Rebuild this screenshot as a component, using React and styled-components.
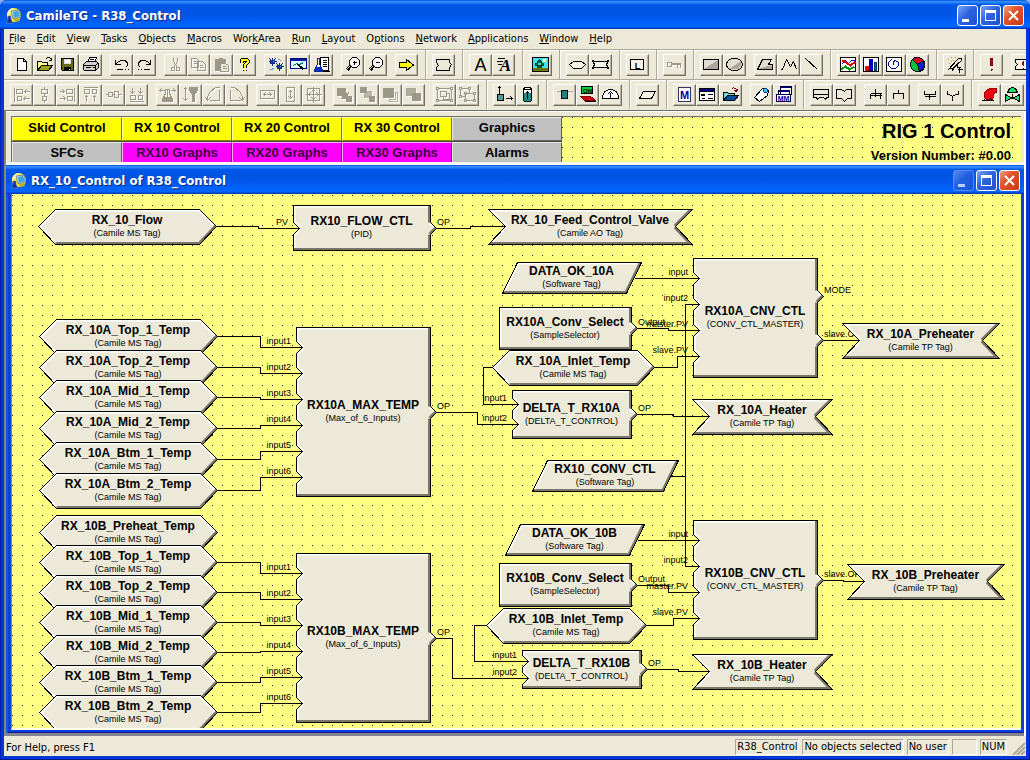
import React from 'react';
import styled, {createGlobalStyle, css} from 'styled-components';

const ui = `"DejaVu Sans Condensed", "DejaVu Sans", sans-serif`;
const arial = `"Liberation Sans", Arial, sans-serif`;
const face = '#ece9d8';

const dots = css`
  background-color: #ffff84;
  background-image: linear-gradient(90deg, #ffff84 9px, transparent 9px), linear-gradient(#222 1px, transparent 1px);
  background-size: 10px 10px;
  background-position: 1px 0;
`;

const GlobalStyle = createGlobalStyle`
  * {
    box-sizing: border-box;
  }

  body {
    margin: 0;
    background: #8fb0ee;
    font-family: ${ui};
    font-size: 11px;
    color: #000;
  }

  button {
    font: inherit;
    color: inherit;
    padding: 0;
    border: 0;
    background: none;
  }
`;

const Frame = styled.div`
  display: flex;
  flex-direction: column;
  height: 100vh;
  overflow: hidden;
  padding: 0 4px 4px;
  border-radius: 7px 7px 0 0;
  background: #0038d8;
  box-shadow: inset 1px 0 #0020b0, inset -1px -1px #001a90;
`;

const TitleBar = styled.header`
  display: flex;
  align-items: center;
  flex: none;
  gap: 4px;
  height: 29px;
  margin: 0 ${({$child}) => ($child ? '-3px 0 -5px' : '-4px')};
  padding: 2px ${({$child}) => ($child ? 4 : 6)}px 0 ${({$child}) => ($child ? 5 : 6)}px;
  color: #fff;
  background: linear-gradient(#0050d8, #3a92ff 6%, #0058e8 16%, #0053e2 45%, #0061fb 80%, #0064ff 92%, #0040c8 97%, #0036b0);
`;

const Title = styled.h1`
  flex: 1;
  margin: 0;
  font-size: 13px;
  line-height: 16px;
  font-weight: bold;
  white-space: nowrap;
  text-shadow: 1px 1px #0a2a80;
`;

const Controls = styled.div`
  display: flex;
  gap: 2px;
`;

const ControlButton = styled.button`
  width: 21px;
  height: 21px;
  border: 1px solid #fff;
  border-radius: 3px;
  background: ${({$close}) => ($close
    ? 'linear-gradient(135deg, #f0a088, #e2532c 40%, #c83a10)'
    : 'linear-gradient(135deg, #7ba4f4, #2e63e0 45%, #1f4fd0)')};

  &:disabled {
    border-color: #7f9fe8;
    opacity: .7;
  }

  svg {
    display: block;
    width: 19px;
    height: 19px;
  }
`;

const Body = styled.div`
  display: flex;
  flex-direction: column;
  flex: 1;
  min-height: 0;
  background: ${face};
`;

const MenuBar = styled.nav`
  display: flex;
  flex: none;
  height: 20px;
`;

const MenuItem = styled.button`
  padding: 0 6px 0 5px;
  line-height: 18px;
  height: 19px;

  u {
    text-underline-offset: 1px;
  }
`;

const ToolRow = styled.div`
  display: flex;
  flex: none;
  height: 30px;
  padding-left: 6px;
  overflow: hidden;
  border-top: 1px solid #aca899;
  box-shadow: inset 0 1px #fff;
`;

const ToolGroup = styled.div`
  display: flex;
  align-items: center;
  flex: none;
  padding-right: ${({$rule}) => ($rule ? 7 : 6)}px;
  margin-right: ${({$rule}) => ($rule ? 6 : 2)}px;
  border-right: ${({$rule}) => ($rule ? '1px solid #aca899' : '0')};
  box-shadow: ${({$rule}) => ($rule ? '1px 0 #fff' : 'none')};
`;

const ToolButton = styled.button`
  flex: none;
  width: 23px;
  height: 22px;
  border: 1px solid;
  border-color: #fff #716f64 #716f64 #fff;
  box-shadow: inset -1px -1px #b8b4a4;
  color: #000;

  &:disabled {
    color: #9c9888;
  }

  &:disabled svg {
    filter: drop-shadow(1px 1px 0 #fff);
  }
`;

const Glyph = styled.svg.attrs({viewBox: '-0.5 -0.5 17 17', shapeRendering: 'crispEdges', 'aria-hidden': true})`
  display: block;
  width: 17px;
  height: 17px;
  margin: 0 auto;
  overflow: visible;
  fill: none;
  stroke: currentColor;

  text {
    stroke: none;
    fill: currentColor;
    text-anchor: middle;
    font-family: ${arial};
    font-weight: bold;
  }
`;

const Workspace = styled.main`
  display: flex;
  flex-direction: column;
  flex: 1;
  min-height: 0;
  margin-top: 1px;
  padding: 0 2px 3px 0;
  border-top: 1px solid #716f64;
  border-left: 2px solid #8a877a;
  background: #85838f;
  box-shadow: inset -2px 0 #fff;
`;

const HeaderWindow = styled.section`
  flex: none;
  padding: 5px 3px 3px 5px;
  background: ${face};
  box-shadow: inset 0 1px #fff, inset 0 -3px #f8f7f0;
`;

const HeaderPanel = styled.div`
  display: flex;
  justify-content: space-between;
  height: 46px;
  overflow: hidden;
  border-top: 1px solid #716f64;
  border-left: 1px solid #716f64;
  font-family: ${arial};
  ${dots}
`;

const NavGrid = styled.div`
  display: grid;
  grid-template-columns: repeat(5, 110px);
  grid-auto-rows: 24px;
  row-gap: 1px;
  height: 49px;
  background: #4c4a3a;
`;

const tones = {
    yellow: ['#ffff00', '#ffffa0', '#808000'],
    pink: ['#ff00ff', '#ffb0ff', '#800080'],
    gray: ['#c0c0c0', '#e8e8e8', '#606060'],
};

const NavButton = styled.button`
  padding-bottom: 3px;
  font-size: 13px;
  font-weight: bold;
  line-height: 16px;
  color: ${({$tone}) => ($tone === 'pink' ? '#38003c' : '#000')};
  background: ${({$tone}) => tones[$tone][0]};
  border: 1px solid;
  border-color: ${({$tone}) => `${tones[$tone][1]} ${tones[$tone][2]} ${tones[$tone][2]} ${tones[$tone][1]}`};
`;

const RigInfo = styled.div`
  padding-right: 10px;
  text-align: right;
  font-weight: bold;
  white-space: nowrap;
`;

const RigName = styled.div`
  font-size: 20px;
  line-height: 28px;
`;

const Version = styled.div`
  font-size: 13px;
  line-height: 22px;
`;

const ChildWindow = styled.section`
  display: flex;
  flex-direction: column;
  flex: 1;
  min-height: 0;
  padding: 0 3px 3px 5px;
  background: #0a3fdc;
  box-shadow: inset 2px 0 #0a5ae6, inset 0 -1px #001a90;
`;

const Canvas = styled.div`
  position: relative;
  flex: 1;
  min-height: 0;
  overflow: hidden;
  border-left: 1px solid #8a877a;
  border-bottom: 2px solid #fffff0;
  font-family: ${arial};
  ${dots}
  background-position: 1px 1px;
`;

const Wires = styled.svg`
  position: absolute;
  left: 0;
  top: 0;
  width: 100%;
  height: 100%;
  fill: none;
  stroke: #000;
`;

const NodeBox = styled.div`
  position: absolute;
  left: ${({$x}) => $x}px;
  top: ${({$y}) => $y}px;
  width: ${({$w}) => $w}px;
  height: ${({$h}) => $h}px;
  display: flex;
  flex-direction: column;
  align-items: center;
  justify-content: center;
  white-space: nowrap;
`;

const Shape = styled.svg`
  position: absolute;
  left: 0;
  top: 0;
  overflow: visible;
`;

const NodeName = styled.strong`
  position: relative;
  font-size: 12px;
  line-height: 13px;
`;

const NodeKind = styled.span`
  position: relative;
  font-size: 9px;
  line-height: 12px;
`;

const Pin = styled.span`
  position: absolute;
  top: ${({$y}) => $y - 12}px;
  font-size: 9px;
  line-height: 12px;
  ${({$out}) => ($out ? 'left: calc(100% + 7px);' : 'right: calc(100% + 5px);')}
`;

const StatusBar = styled.footer`
  display: flex;
  align-items: center;
  flex: none;
  gap: 3px;
  height: 20px;
  padding: 3px 0 1px 2px;
  white-space: nowrap;
`;

const Help = styled.span`
  flex: 1;
`;

const StatusCell = styled.span`
  height: 16px;
  line-height: 14px;
  min-width: ${({$w}) => $w}px;
  padding: 0 1px;
  border: 1px solid;
  border-color: #aca899 #fff #fff #aca899;
`;

const icons = {
    New: <path d="M4 2h6l3 3v9H4zM10 2v3h3" fill="#fff"/>,
    Open: <>
        <path d="M1 14V5h4l1 1h5v3" fill="#ffff90"/>
        <path d="M1 14l4-5h11l-4 5z" fill="#a0a020"/>
        <path d="M9 3l2-2h2l2 2M15 1v3h-3"/>
    </>,
    Save: <>
        <path d="M2 2h12v12H3l-1-1z" fill="#6b6b10"/>
        <path d="M5 3h6v4H5z" fill="#fff" stroke="#ddd"/>
        <path d="M5 11h6v3H5z" fill="#000"/>
        <path d="M10 12v1" stroke="#fff"/>
    </>,
    Print: <>
        <path d="M5 6l2-5h7l-2 5z" fill="#fff"/>
        <path d="M1 8l3-3h10l2 2v4l-3 3H2l-1-1z" fill="#d0d0d0"/>
        <path d="M7 3h4M6 5h4M1 9h12l2-2M3 11h9M13 9v4"/>
        <path d="M8 11h2" stroke="#dd0"/>
    </>,
    Undo: <path d="M2 3v5h5M2 8l3-3 3-1h3l2 1 1 2v2l-2 2M3 13h6M11 13h1M14 13h1"/>,
    Redo: <path d="M14 3v5H9M14 8l-3-3-3-1H5L3 5 2 7v2l2 2M13 13H7M5 13H4M2 13H1"/>,
    Cut: <path d="M6 1v4l4 6M10 1v4l-4 6M4 11h3v3H4zM9 11h3v3H9z"/>,
    Copy: <path d="M1 2h5l2 2v7H1zM3 5h3M3 7h3M7 5h5l3 3v6H7zM9 9h3M9 11h4"/>,
    Paste: <>
        <path d="M2 3h10v11H2z" fill="currentColor"/>
        <path d="M5 2h4"/>
        <path d="M7 7h5l3 2v6H7z" fill="#ece9d8"/>
        <path d="M9 10h3M9 12h4"/>
    </>,
    HelpTopics: <>
        <path d="M5 6V4l1-1h4l1 1v2L8 9v2M8 13v1" stroke="#000" strokeWidth="4"/>
        <path d="M5 6V4l1-1h4l1 1v2L8 9v2M8 13v1" stroke="#ff0" strokeWidth="2"/>
    </>,
    Configure: <>
        <path d="M1 5h8M5 1v8M2 2l6 6M8 2L2 8M8 10h8M12 6v8M9 7l6 6M15 7l-6 6" stroke="#102a90"/>
        <path d="M3 4h4v3H3zM10 9h4v3h-4z" fill="#1838a8" stroke="#102a90"/>
        <path d="M5 5h1M12 10h1M3 13l4-1M11 3l3 1" stroke="#58a8d8"/>
    </>,
    Monitor: <>
        <path d="M0 2h16v10H0z" fill="#e0ffff" stroke="#000080"/>
        <path d="M0 3h16" stroke="#0020a0" strokeWidth="2"/>
        <path d="M3 9l3-2 3 1 4-2" stroke="#008080"/>
        <path d="M7 8l6 6M8 8l6 5" stroke="#000"/>
    </>,
    Recipe: <>
        <path d="M7 1h8v13H7z" fill="#fff"/>
        <path d="M9 4h4M9 6h4M9 8h4M9 10h4M5 15h11"/>
        <path d="M4 2v6l-3 5v2h8v-2L6 8V2z" fill="#fff" stroke="#102a90"/>
        <path d="M3 11h4l1 3H2z" fill="#0030d0" stroke="#0030d0"/>
    </>,
    ZoomIn: <>
        <path d="M8 1h4l3 3v4l-3 3H8L5 8V4z" fill="#fff"/>
        <path d="M8 6h4M10 4v4"/>
        <path d="M6 10l-4 4M5 9l-4 4M6 11l-3 4"/>
    </>,
    ZoomOut: <>
        <path d="M8 1h4l3 3v4l-3 3H8L5 8V4z" fill="#fff"/>
        <path d="M8 6h4"/>
        <path d="M6 10l-4 4M5 9l-4 4M6 11l-3 4"/>
    </>,
    Go: <path d="M1 6h7V3l7 5.500-7 5.500v-3H1z" fill="#ff0"/>,
    Block: <path d="M1 3h13v3l2 2-2 3v3H1v-3l2-2-2-3z" fill={face}/>,
    Text: <text x="8" y="14" fontSize="18" style={{fontFamily: arial, fontWeight: 400}}>A</text>,
    DynamicText: <>
        <text x="10" y="14" fontSize="17" style={{fontFamily: '"Liberation Serif", serif', fontStyle: 'italic'}}>A</text>
        <path d="M2 2h7M1 5h6M2 8h4"/>
    </>,
    Picture: <>
        <path d="M0 1h16v14H0z" fill="#40e0f0"/>
        <path d="M1 12h14v2H1z" fill="#606010" stroke="#808000"/>
        <path d="M5 11V5l2-2 2 2v6M3 6v3h8V7" fill="#006030" stroke="#004020"/>
        <path d="M11 3h2v2h-2z" fill="#ff0" stroke="#fff"/>
    </>,
    Tag: <path d="M4 5h8l4 3-4 4H4L0 8z" fill="#f6f4e8"/>,
    OutputTag: <path d="M0 4l3 1h10l3-1-2 4 2 4-3-1H3l-3 1 2-4z" fill="#f6f4e8"/>,
    Label: <>
        <path d="M1 3h13v10H1z" fill="#f6f4e8"/>
        <text x="8" y="12" fontSize="9">L</text>
    </>,
    Key: <path d="M1 6h4v4H1zM5 8h9v3M11 8v3M5 7h9"/>,
    Rectangle: <>
        <path d="M0 3h15v10H0z" fill="#e0ded0"/>
        <path d="M1 12L14 4v8z" fill="#aca899" stroke="none"/>
    </>,
    Ellipse: <>
        <ellipse cx="8" cy="8" rx="8" ry="6" fill="#e0ded0"/>
        <path d="M3 12L14 5l1 3-3 4-4 1z" fill="#aca899" stroke="none"/>
    </>,
    Polygon: <>
        <path d="M5 3h9l-3 5h4v5H0z" fill="#e0ded0"/>
        <path d="M3 12l8-3h3v3z" fill="#aca899" stroke="none"/>
    </>,
    Polyline: <path d="M0 13h2l4-10 4 7 3-5 3 8"/>,
    Line: <path d="M2 2l12 11"/>,
    Trend: <>
        <path d="M0 1h15v14H0z" fill="#fff"/>
        <path d="M1 8l4-4 3 3 3-3h4" stroke="#00f"/>
        <path d="M1 4h2l4 3 3 2 5-4" stroke="#d00" strokeWidth="2"/>
        <path d="M1 13l4-3 4 3 5-3" stroke="#090" strokeWidth="2"/>
    </>,
    BarChart: <>
        <path d="M0 1h15v14H0z" fill="#fff"/>
        <path d="M2 10h3v4H2z" fill="#e00" stroke="#e00"/>
        <path d="M6 3h3v11H6z" fill="#00c" stroke="#00c"/>
        <path d="M11 6h2v8h-2z" fill="#080" stroke="#004060"/>
    </>,
    XYPlot: <>
        <path d="M0 1h15v14H0z" fill="#fff"/>
        <path d="M5 3L2 6v3l3 3h4l3-3V6L9 4 7 5v3" stroke="#0000a0"/>
    </>,
    Pie: <>
        <circle cx="8" cy="8" r="7" fill="#00c040"/>
        <path d="M8 8L3 3a7 7 0 0 1 11 1z" fill="#e00020"/>
        <path d="M8 8l6-4a7 7 0 0 1-4 11z" fill="#1020d0"/>
    </>,
    Wizard: <>
        <path d="M1 14L12 2h3v2L6 12H3M5 15l6-8v4h3M13 10v6M11 13h5" fill="none"/>
        <path d="M1 3h1M4 1h1M6 4h1M2 7h1M8 1h1M4 5h1" stroke="#a0a000"/>
    </>,
    Alarm: <path d="M7 2h2v7H7zM8 12v2M7 13h2" stroke="#800010" fill="#a00010"/>,
    AlarmBlock: <>
        <path d="M1 3h14v10H1v-3l2-2-2-2z" fill="#f6f4e8"/>
        <path d="M9 4v5M9 11v1M8 5v3" stroke="#900"/>
    </>,
    AlignLeft: <path d="M1 1v14M3 3h6v4H3zM4 10h4v4H4zM11 5h5M11 5l2-2M11 5l2 2M10 12h6M10 12l2-2M10 12l2 2"/>,
    AlignCenter: <path d="M8 0v3M5 3h6v4H5zM8 7v3M6 10h4v4H6zM8 14v2"/>,
    AlignRight: <path d="M15 1v14M7 3h6v4H7zM8 10h5v4H8zM0 5h5M5 5L3 3M5 5L3 7M0 12h6M6 12l-2-2M6 12l-2 2"/>,
    AlignTop: <path d="M1 1h14M2 3h5v4H2zM10 3h4v4h-4zM4 15V9M4 9l-2 2M4 9l2 2M12 15V9M12 9l-2 2M12 9l2 2"/>,
    AlignMiddle: <path d="M0 8h3M3 6h4v4H3zM7 8h2M9 5h4v6H9zM13 8h3"/>,
    AlignBottom: <path d="M1 15h14M2 9h5v4H2zM10 9h4v4h-4zM4 1v6M4 7L2 5M4 7l2-2M12 1v6M12 7l-2-2M12 7l2-2"/>,
    FlipHorizontal: <>
        <path d="M6 3h4v4l3 6v2H3v-2l3-6z"/>
        <path d="M4 11h8l1 4H3zM8 3v8" fill="currentColor"/>
        <path d="M0 4h5M0 4l2-2M0 4l2 2M16 4h-5M16 4l-2-2M16 4l-2 2"/>
    </>,
    FlipVertical: <>
        <path d="M7 1h8v3l-3 4v7h-2V8L7 4z" fill="currentColor"/>
        <path d="M3 1v13M3 1L1 3M3 1l2 2M3 14l-2-2M3 14l2-2"/>
    </>,
    RotateLeft: <path d="M14 1h-4L5 5l-3 5v4M2 14l-2-3M2 14l3-3M4 14h10V3"/>,
    RotateRight: <path d="M2 1h4l5 4 3 5v4M14 14l2-3M14 14l-3-3M12 14H2V3"/>,
    SameWidth: <path d="M1 4h14v8H1zM4 8h8M4 8l2-2M4 8l2 2M12 8l-2-2M12 8l-2 2"/>,
    SameHeight: <path d="M4 1h8v14H4zM8 4v8M8 4L6 6M8 4l2 2M8 12l-2-2M8 12l2-2"/>,
    SameSize: <path d="M2 2h12v12H2zM0 8h16M8 0v16M5 6L3 8l2 2M11 6l2 2-2 2M6 5l2-2 2 2M6 11l2 2 2-2"/>,
    ToFront: <>
        <path d="M1 2h8v7H1zM6 7h5v5H6z" fill="currentColor"/>
        <path d="M12 5v2M4 12h1M10 10h5v5h-5z" fill="currentColor"/>
    </>,
    ToBack: <>
        <path d="M1 1h6v5H1zM10 10h5v5h-5z" fill="currentColor"/>
        <path d="M5 5h7v6H5z" fill="currentColor" opacity=".7"/>
    </>,
    Forward: <>
        <path d="M1 2h10v9H1z" fill="currentColor"/>
        <path d="M13 6h2v9H7v-2h6z" opacity=".8"/>
    </>,
    Backward: <>
        <path d="M1 2h9v7H1z" opacity=".8" fill="currentColor"/>
        <path d="M7 7h8v7H7z" fill="currentColor"/>
    </>,
    Group: <path d="M0 1h2v2H0zM14 1h2v2h-2zM0 13h2v2H0zM14 13h2v2h-2zM2 2h12M1 3v10M15 3v10M2 14h12M4 5h6v5H4zM7 10v3h6V7h-3"/>,
    Ungroup: <path d="M0 1h2v2H0zM9 1h2v2H9zM0 9h2v2H0zM2 2h7M1 3v6M10 3v3M2 10h3M5 6h2v2H5zM14 6h2v2h-2zM5 13h2v2H5zM14 13h2v2h-2zM7 7h7M6 8v5M15 8v5M7 14h7"/>,
    Move: <>
        <path d="M1 8h6v6H1z" fill="#50a098"/>
        <path d="M3 7V0M1 2l2-2 2 2M9 12h7M14 10l2 2-2 2"/>
    </>,
    Level: <>
        <path d="M5 1h6l1 2v11l-1 1H5l-1-1V3z" fill="#fff"/>
        <path d="M5 7h6v7H5z" fill="#208888" stroke="#208888"/>
        <path d="M4 3h8M8 12V5M6 7l2-2 2 2"/>
    </>,
    Pipe: <>
        <path d="M0 5h16" stroke="#aaa"/>
        <path d="M5 4h6v8H5z" fill="#208080"/>
    </>,
    Switch: <>
        <path d="M2 0h11v7H2z" fill="#00d040"/>
        <text x="8" y="6" fontSize="6">ON</text>
        <path d="M1 10h9l3 1 3 3H5z" fill="#d00010" stroke="#800"/>
        <path d="M5 15h11"/>
    </>,
    Gauge: <path d="M0 11c0-4 3-8 8-8s8 4 8 8v1H0zM8 12V6M5 8l3-3 3 3" fill="#fff"/>,
    Parameter: <path d="M4 5h12l-4 7H0z" fill="#f6f4e8"/>,
    Macro: <>
        <path d="M2 1h12v14H2z" fill="#fff" stroke="#336"/>
        <text x="8" y="12" fontSize="11" style={{fill: '#0000a0'}}>M</text>
    </>,
    Form: <>
        <path d="M0 2h15v12H0z" fill="#fff"/>
        <path d="M0 2h15v3H0z" fill="#000080"/>
        <path d="M2 8h3v1H2zM8 8h5M2 12h3M8 12h5"/>
    </>,
    Library: <>
        <path d="M1 14V6h4l1 1h6v2" fill="#70e0e0"/>
        <path d="M1 14l4-5h11l-4 5z" fill="#0050a0"/>
        <path d="M9 3l2-2 3 2v2M15 3l-1 2-2-1" stroke="#800020"/>
    </>,
    Ticket: <>
        <path d="M9 2l6 2-1 5-8 6-5-4z" fill="#fff"/>
        <circle cx="12" cy="4" r="2" fill="#40c0f0" stroke="#0040a0"/>
    </>,
    MacroList: <>
        <path d="M4 0h11v8H4zM2 4h11v8H2z" fill="#fff" stroke="#000040"/>
        <path d="M4 1h11M2 5h11" stroke="#000080"/>
        <path d="M0 8h14v7H0z" fill="#fff" stroke="#000040"/>
        <text x="7" y="14" fontSize="7" style={{fill: '#0000a0'}}>MM</text>
    </>,
    Parallel: <path d="M0 3h15v8h-2l-1 2-2-2H6l-2 2-1-2H0zM0 8h15"/>,
    Choice: <path d="M0 3h5l3 2 2-2h5v9h-4l-3 3-3-3H0z"/>,
    SplitDouble: <path d="M8 2v5M3 7h11M3 9h11M3 7v5M8 7v3M13 7v5"/>,
    Split: <path d="M8 3v4M3 12V7h10v5"/>,
    JoinDouble: <path d="M3 4v4h11V4M3 10h11M8 8v5M8 10v3"/>,
    Join: <path d="M3 4v4h2l3 2 3-2h3V4M8 10v4"/>,
    Pump: <>
        <path d="M15 2h-5L6 3 3 6v5l2 2h6l1-3 1-4h2z" fill="#f00010" stroke="#900"/>
        <path d="M0 14h12M4 12l-2 2M9 12l2 2"/>
    </>,
    Valve: <>
        <path d="M3 6l2-4 3-1 3 1 2 4z" fill="#20e060"/>
        <path d="M8 7v4"/>
        <path d="M1 8v7l7-4 7 4V8l-7 4z" fill="#20e060"/>
    </>,
};

// one string per group: "|" puts a rule after it, "-" disables a button
const toolRows = [
    [
        'New Open Save Print', 'Undo Redo', '-Cut -Copy -Paste HelpTopics', 'Configure Monitor Recipe', 'ZoomIn ZoomOut',
        '|Go', '|Block', '|Text DynamicText', '|Picture', '|Tag OutputTag', '|Label', '|-Key', 'Rectangle Ellipse',
        '|Polygon Polyline Line', '|Trend BarChart XYPlot Pie', '|Wizard', 'Alarm', 'AlarmBlock',
    ],
    [
        '-AlignLeft -AlignCenter -AlignRight -AlignTop -AlignMiddle -AlignBottom',
        '-FlipHorizontal -FlipVertical -RotateLeft -RotateRight', '-SameWidth -SameHeight -SameSize',
        '-ToFront -ToBack -Forward -Backward', '|-Group -Ungroup', '|Move Level', '|Pipe Switch Gauge', '|Parameter',
        'Macro Form Library', '|Ticket MacroList', 'Parallel Choice', 'SplitDouble Split', '|JoinDouble Join', 'Pump Valve',
    ],
];

const menu = ['_File', '_Edit', '_View', '_Tasks', '_Objects', '_Macros', 'Wor_kArea', '_Run', '_Layout', 'O_ptions',
    '_Network', '_Applications', '_Window', '_Help'];

const nav = [
    ['Skid Control', 'yellow'], ['RX 10 Control', 'yellow'], ['RX 20 Control', 'yellow'], ['RX 30 Control', 'yellow'], ['Graphics', 'gray'],
    ['SFCs', 'gray'], ['RX10 Graphs', 'pink'], ['RX20 Graphs', 'pink'], ['RX30 Graphs', 'pink'], ['Alarms', 'gray'],
];

const hex = (name, x, y, w = 178) => ({shape: 'hex', name, kind: 'Camile MS Tag', x, y, w, h: 35});
const ribbon = (name, kind, x, y, w) => ({shape: 'ribbon', name, kind, x, y, w, h: 35});
const slant = (name, x, y, w) => ({shape: 'slant', name, kind: 'Software Tag', x, y, w, h: 31});
const block = (name, kind, x, y, w, h, ins, outs) => ({shape: 'block', name, kind, x, y, w, h, ins, outs});

const sixInputs = [['input1', 20], ['input2', 46], ['input3', 72], ['input4', 98], ['input5', 124], ['input6', 150]];
const masterInputs = [['input', 20], ['input2', 46], ['master.PV', 72], ['slave.PV', 98]];

const tagsA = [['Top_1', 125], ['Top_2', 156], ['Mid_1', 186], ['Mid_2', 217], ['Btm_1', 248], ['Btm_2', 279]];
const tagsB = [['Top_1', 351], ['Top_2', 381], ['Mid_1', 411], ['Mid_2', 441], ['Btm_1', 471], ['Btm_2', 501]];

const nodes = [
    hex('RX_10_Flow', 26, 15),
    block('RX10_FLOW_CTL', 'PID', 281, 11, 137, 45, [['PV', 23]], [['OP', 23]]),
    ribbon('RX_10_Feed_Control_Valve', 'Camile AO Tag', 476, 15, 204),
    ...tagsA.map(([name, y]) => hex(`RX_10A_${name}_Temp`, 27, y)),
    hex('RX_10B_Preheat_Temp', 27, 321),
    ...tagsB.map(([name, y]) => hex(`RX_10B_${name}_Temp`, 27, y)),
    block('RX10A_MAX_TEMP', 'Max_of_6_Inputs', 284, 133, 134, 169, sixInputs, [['OP', 85]]),
    block('RX10B_MAX_TEMP', 'Max_of_6_Inputs', 284, 359, 134, 169, sixInputs, [['OP', 85]]),
    slant('DATA_OK_10A', 490, 68, 139),
    block('RX10A_Conv_Select', 'SampleSelector', 487, 113, 132, 42, [], [['Output', 21]]),
    hex('RX_10A_Inlet_Temp', 480, 156, 162),
    block('DELTA_T_RX10A', 'DELTA_T_CONTROL', 500, 196, 119, 48, [['input1', 14], ['input2', 34]], [['OP', 24]]),
    slant('RX10_CONV_CTL', 520, 266, 146),
    slant('DATA_OK_10B', 493, 330, 139),
    block('RX10B_Conv_Select', 'SampleSelector', 487, 369, 132, 43, [], [['Output', 22]]),
    hex('RX_10B_Inlet_Temp', 474, 414, 160),
    block('DELTA_T_RX10B', 'DELTA_T_CONTROL', 510, 456, 119, 38, [['input1', 11], ['input2', 28]], [['OP', 19]]),
    block('RX10A_CNV_CTL', 'CONV_CTL_MASTER', 681, 64, 124, 119, masterInputs, [['MODE', 38], ['slave.OP', 82]]),
    block('RX10B_CNV_CTL', 'CONV_CTL_MASTER', 681, 326, 124, 119, masterInputs, [['slave.OP', 60]]),
    ribbon('RX_10A_Preheater', 'Camile TP Tag', 830, 129, 157),
    ribbon('RX_10A_Heater', 'Camile TP Tag', 680, 205, 140),
    ribbon('RX_10B_Preheater', 'Camile TP Tag', 835, 370, 157),
    ribbon('RX_10B_Heater', 'Camile TP Tag', 680, 460, 140),
];

const wires = [
    'M204 32H246V34H287', 'M424 34H458V32H493',
    ...tagsA.map(([, y], i) => `M205 ${y + 17}H248V${153 + i * 26}H290`),
    ...tagsB.map(([, y], i) => `M205 ${y + 17}H248V${379 + i * 26}H290`),
    'M424 218H465V230H506', 'M424 444H440V484H516',
    'M480 173H471V210H506', 'M474 431H462V467H516',
    'M625 220H661V222H697', 'M635 475H666V477H697',
    'M622 84H687', 'M625 346H687',
    'M658 282H673M687 110H673V372H687',
    'M625 134H656V136H687', 'M625 391H656V398H687',
    'M642 173H665V162H687', 'M634 431H661V424H687',
    'M811 146H847', 'M811 386H831V387H852',
];

const outline = ({shape, w, h, ins = [], outs = []}) => {
    if (shape === 'hex') return [[17, 0], [w - 17, 0], [w, 17], [w - 17, h], [17, h], [0, 17]];
    if (shape === 'ribbon') return [[0, 0], [w, 0], [w - 17, 17], [w, h], [0, h], [17, 17]];
    if (shape === 'slant') return [[15, 0], [w, 0], [w - 15, h], [0, h]];
    return [
        [0, 0], [w, 0],
        ...outs.flatMap(([, y]) => [[w, y - 6], [w + 6, y], [w, y + 6]]),
        [w, h], [0, h],
        ...[...ins].reverse().flatMap(([, y]) => [[0, y + 6], [6, y], [0, y - 6]]),
    ];
};

const Node = ({node}) => {
    const {name, kind, x, y, w, h, ins = [], outs = []} = node;
    const pts = outline(node);
    const points = pts.join(' ');
    const edges = pts.map((p, i) => [p, pts[(i + 1) % pts.length]]);
    const shaded = ([[x1, y1], [x2, y2]]) => (y2 - y1) - (x2 - x1) > 0;
    const toPath = list => list.map(([a, b]) => `M${a}L${b}`).join('');

    return (
        <NodeBox $x={x} $y={y} $w={w} $h={h}>
            <Shape width={w + 1} height={h + 1} viewBox={`-0.5 -0.5 ${w + 1} ${h + 1}`}>
                <clipPath id={name}><polygon points={points}/></clipPath>
                <polygon points={points} fill={face}/>
                <g clipPath={`url(#${name})`}>
                    <path d={toPath(edges.filter(e => !shaded(e)))} stroke="#fff" strokeWidth="4"/>
                    <path d={toPath(edges.filter(shaded))} stroke="#7b7768" strokeWidth="5"/>
                </g>
                <polygon points={points} fill="none" stroke="#000" shapeRendering="crispEdges"/>
            </Shape>
            {ins.map(([label, py]) => <Pin key={label} $y={py}>{label}</Pin>)}
            {outs.map(([label, py]) => <Pin key={label} $y={py} $out>{label}</Pin>)}
            <NodeName>{name}</NodeName>
            <NodeKind>({kind})</NodeKind>
        </NodeBox>
    );
};

const Logo = () => (
    <svg width="16" height="16" viewBox="0 0 16 16" aria-hidden="true">
        <circle cx="8" cy="7" r="7" fill="#f4ec30"/>
        <path d="M8 0a7 7 0 0 0-7 8l4-3z" fill="#fff8b0"/>
        <path d="M5 3l8-1 2 7-8 2z" fill="#b8d4e8" stroke="#557" strokeWidth=".6"/>
        <path d="M7 4l5-1 2 5-6 2z" fill="#38a8e0"/>
        <path d="M8 11l5-1 1 3-5 1z" fill="#b8b030"/>
        <path d="M2 8h3v3l2 4H0l2-4z" fill="#1030a0" stroke="#99b" strokeWidth=".5"/>
    </svg>
);

const WindowTitle = ({text, child}) => (
    <TitleBar $child={child}>
        <Logo/>
        <Title as={child ? 'h2' : 'h1'}>{text}</Title>
        <Controls>
            <ControlButton aria-label="Minimize" disabled={child}>
                <svg viewBox="0 0 19 19"><path d="M4 13h7v3H4z" fill="#fff"/></svg>
            </ControlButton>
            <ControlButton aria-label="Maximize">
                <svg viewBox="0 0 19 19"><path d="M4 4h11v11H4zM5 7v7h9V7z" fill="#fff" fillRule="evenodd"/></svg>
            </ControlButton>
            <ControlButton aria-label="Close" $close>
                <svg viewBox="0 0 19 19"><path d="M5 5l9 9M14 5l-9 9" stroke="#fff" strokeWidth="2"/></svg>
            </ControlButton>
        </Controls>
    </TitleBar>
);

const Tool = ({id}) => {
    const name = id.replace('-', '');
    return (
        <ToolButton aria-label={name} disabled={id.startsWith('-')}>
            <Glyph>{icons[name]}</Glyph>
        </ToolButton>
    );
};

const App = () => (
    <>
        <GlobalStyle/>
        <Frame>
            <WindowTitle text="CamileTG - R38_Control"/>
            <Body>
                <MenuBar>
                    {menu.map(item => {
                        const [before, after] = item.split('_');
                        return <MenuItem key={item}>{before}<u>{after[0]}</u>{after.slice(1)}</MenuItem>;
                    })}
                </MenuBar>
                {toolRows.map((groups, row) => (
                    <ToolRow key={row} role="toolbar">
                        {groups.map(group => (
                            <ToolGroup key={group} $rule={group.startsWith('|')}>
                                {group.replace('|', '').split(' ').map(id => <Tool key={id} id={id}/>)}
                            </ToolGroup>
                        ))}
                    </ToolRow>
                ))}
                <Workspace>
                    <HeaderWindow>
                        <HeaderPanel>
                            <NavGrid>
                                {nav.map(([label, tone]) => <NavButton key={label} $tone={tone}>{label}</NavButton>)}
                            </NavGrid>
                            <RigInfo>
                                <RigName>RIG 1 Control</RigName>
                                <Version>Version Number: #0.00</Version>
                            </RigInfo>
                        </HeaderPanel>
                    </HeaderWindow>
                    <ChildWindow>
                        <WindowTitle child text="RX_10_Control of R38_Control"/>
                        <Canvas>
                            <Wires shapeRendering="crispEdges">
                                <g transform="translate(.5 .5)">
                                    {wires.map(d => <path key={d} d={d}/>)}
                                </g>
                            </Wires>
                            {nodes.map(node => <Node key={node.name} node={node}/>)}
                        </Canvas>
                    </ChildWindow>
                </Workspace>
                <StatusBar>
                    <Help>For Help, press F1</Help>
                    <StatusCell>R38_Control</StatusCell>
                    <StatusCell>No objects selected</StatusCell>
                    <StatusCell>No user</StatusCell>
                    <StatusCell $w={25}/>
                    <StatusCell $w={27}>NUM</StatusCell>
                    <svg width="16" height="16" viewBox="2 0 16 16" aria-hidden="true">
                        <path d="M5 16L17 4M9 16l8-8M13 16l4-4" stroke="#aca899" strokeWidth="2"/>
                    </svg>
                </StatusBar>
            </Body>
        </Frame>
    </>
);

export default App;
